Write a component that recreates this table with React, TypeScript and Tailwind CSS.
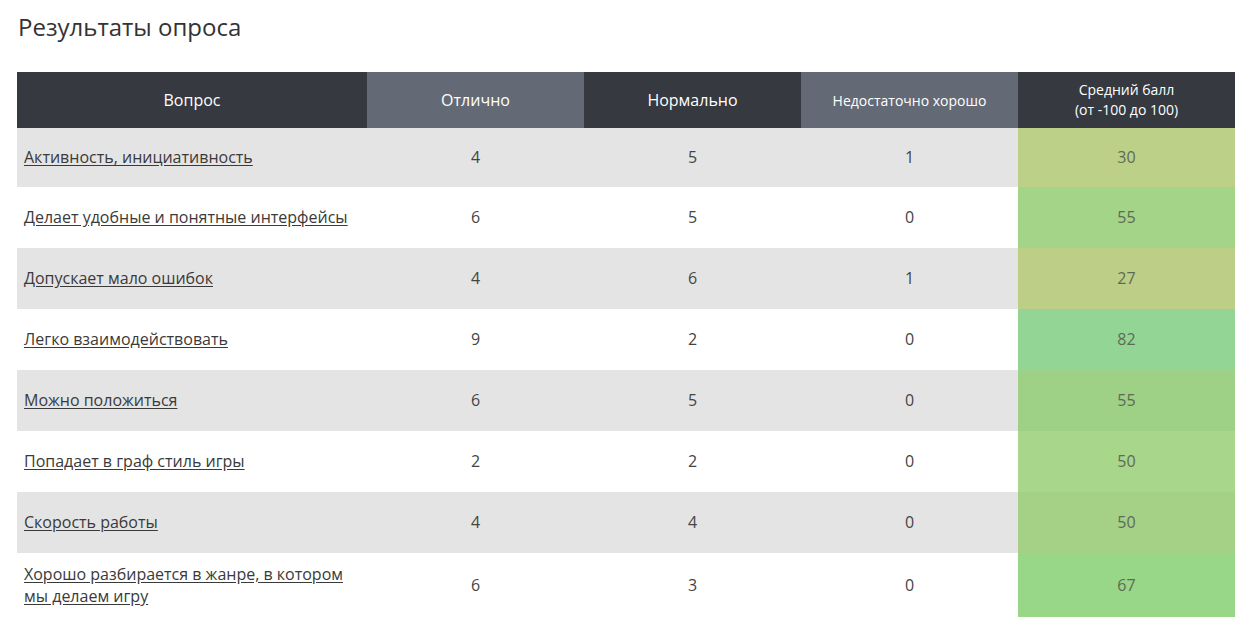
import React from "react";

const rows = [
  { q: "Активность, инициативность", a: 4, b: 5, c: 1, s: 30, bg: "bg-[#bdd087]", h: "h-[59px]", gray: true },
  { q: "Делает удобные и понятные интерфейсы", a: 6, b: 5, c: 0, s: 55, bg: "bg-[#a3d487]", h: "h-[61px]", gray: false },
  { q: "Допускает мало ошибок", a: 4, b: 6, c: 1, s: 27, bg: "bg-[#bdcf87]", h: "h-[61px]", gray: true },
  { q: "Легко взаимодействовать", a: 9, b: 2, c: 0, s: 82, bg: "bg-[#93d595]", h: "h-[61px]", gray: false },
  { q: "Можно положиться", a: 6, b: 5, c: 0, s: 55, bg: "bg-[#9ed086]", h: "h-[61px]", gray: true },
  { q: "Попадает в граф стиль игры", a: 2, b: 2, c: 0, s: 50, bg: "bg-[#a8d68a]", h: "h-[61px]", gray: false },
  { q: "Скорость работы", a: 4, b: 4, c: 0, s: 50, bg: "bg-[#a5d187]", h: "h-[61px]", gray: true },
  { q: "Хорошо разбирается в жанре, в котором мы делаем игру", a: 6, b: 3, c: 0, s: 67, bg: "bg-[#98d688]", h: "h-[64px]", gray: false },
];

export default function App() {
  return (
    <div className="min-h-[636px] bg-white px-[17px] pt-[10px]" style={{ fontFamily: '"Open Sans", "Noto Sans", sans-serif' }}>
      <h1 className="text-[24px] leading-[34px] text-[#333333] font-normal pl-[1px]">Результаты опроса</h1>
      <table className="mt-[28px] w-[1218px] table-fixed border-collapse">
        <colgroup>
          <col className="w-[350px]" />
          <col className="w-[217px]" />
          <col className="w-[217px]" />
          <col className="w-[217px]" />
          <col className="w-[217px]" />
        </colgroup>
        <thead>
          <tr className="h-[56px] text-white">
            <th className="bg-[#363940] font-normal text-[16px]">Вопрос</th>
            <th className="bg-[#646a75] font-normal text-[16px]">Отлично</th>
            <th className="bg-[#363940] font-normal text-[16px]">Нормально</th>
            <th className="bg-[#646a75] font-normal text-[14px]">Недостаточно хорошо</th>
            <th className="bg-[#363940] font-normal text-[14px] leading-[20px]">
              Средний балл
              <br />
              (от -100 до 100)
            </th>
          </tr>
        </thead>
        <tbody>
          {rows.map((r, i) => (
            <tr key={i} className={`${r.h} ${r.gray ? "bg-[#e4e4e4]" : "bg-white"} text-[16px] text-[#444444]`}>
              <td className="pl-[7px] pr-[10px] leading-[22px] pb-[1px]">
                <a href="#" className="underline text-[#3a3a3a] underline-offset-[2px]">
                  {r.q}
                </a>
              </td>
              <td className="text-center pb-[1px]">{r.a}</td>
              <td className="text-center pb-[1px]">{r.b}</td>
              <td className="text-center pb-[1px]">{r.c}</td>
              <td className={`text-center pb-[1px] ${r.bg} text-[#5d6b55]`}>{r.s}</td>
            </tr>
          ))}
        </tbody>
      </table>
    </div>
  );
}
